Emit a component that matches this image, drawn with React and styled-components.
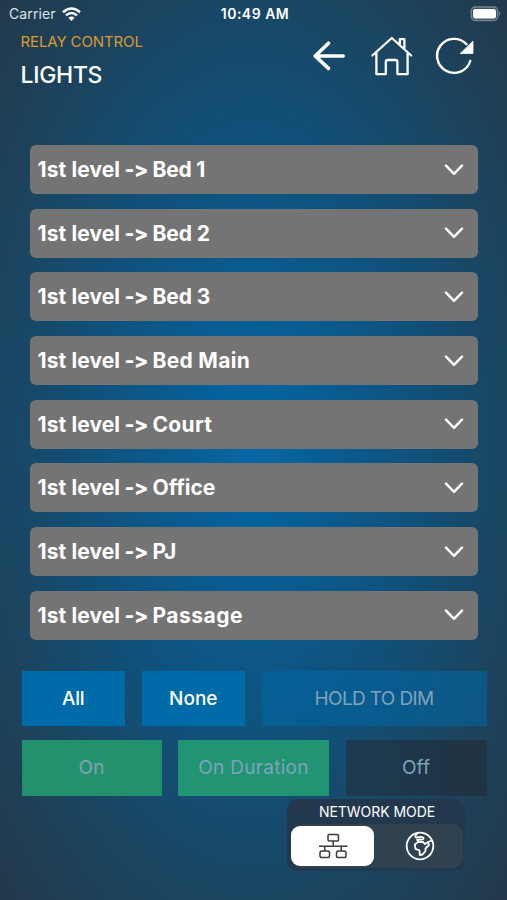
import React from "react";
import styled, { createGlobalStyle } from "styled-components";

const Global = createGlobalStyle`
  *{box-sizing:border-box}
  body{margin:0;background:#20384d}
  button{border:0;margin:0;padding:0;background:none;color:inherit;font:inherit}
`;
const Screen = styled.main`
  width:507px;height:900px;overflow:hidden;display:flex;flex-direction:column;color:#fff;
  font-family:Inter,"Liberation Sans",sans-serif;font-feature-settings:"calt" 0;
  background:radial-gradient(ellipse farthest-corner at 50% 49%,#0067a6 0%,#0a5b8e 25%,#124f77 50%,#1b4560 72%,#23384a 100%);
`;
const StatusBar = styled.div`
  height:28px;flex:none;display:grid;grid-template-columns:1fr auto 1fr;align-items:center;
  padding:0 6px 0 9px;font-size:14px;line-height:28px;
`;
const Carrier = styled.div`display:flex;align-items:center;gap:6px;color:#dbe3ea;letter-spacing:.1px;`;
const Time = styled.div`font-weight:600;letter-spacing:.5px;`;
const Battery = styled.svg`justify-self:end;display:block;margin-top:-1px;`;
const Header = styled.header`height:117px;flex:none;display:flex;justify-content:space-between;padding:0 32px 0 20.5px;`;
const Titles = styled.div`padding-top:4px;`;
const Eyebrow = styled.div`font-size:15px;line-height:20px;color:#dc9a2f;letter-spacing:-.12px;white-space:nowrap;`;
const Title = styled.h1`margin:9px 0 0;font-size:23px;line-height:28px;font-weight:500;letter-spacing:-.3px;`;
const Actions = styled.nav`display:flex;align-items:flex-start;padding-top:7px;gap:22px;svg{display:block}svg:first-child{margin-right:4px}`;
const List = styled.section`display:flex;flex-direction:column;gap:14.7px;padding:0 29.5px 0 30px;flex:none;`;
const Row = styled.button`
  height:49px;border-radius:6px;background:#747474;display:flex;align-items:center;justify-content:space-between;
  padding:0 14px 0 7.5px;font-size:21px;font-weight:700;text-align:left;
`;
const Path = styled.span`display:grid;grid-template-columns:87px 28px auto;align-items:center;white-space:pre;`;
const Level = styled.span`letter-spacing:.1px;`;
const Arrow = styled.span`font-weight:800;letter-spacing:-.5px;`;
const Room = styled.span`letter-spacing:${p => p.$ls}px;`;
const Controls = styled.section`display:flex;flex-direction:column;gap:14px;padding:31px 20.5px 0 21.5px;flex:none;`;
const ControlRow = styled.div`display:grid;grid-template-columns:${p => p.$cols};gap:16.5px;`;
const Control = styled.button`
  height:55.5px;padding-bottom:1px;background:${p => p.$bg};color:${p => p.$dim ? "#7fa3b8" : "#fff"};
  font-size:19px;font-weight:${p => p.$dim ? 400 : 500};letter-spacing:${p => p.$ls || 0}px;white-space:nowrap;
`;
const Mode = styled.section`
  align-self:flex-end;margin:3px 42px 0 0;width:178px;height:72px;border-radius:11px;background:#22394d;
  display:flex;flex-direction:column;align-items:center;padding:3px 2px 3px 4px;
`;
const ModeLabel = styled.div`font-size:14px;line-height:20px;height:22px;letter-spacing:-.05px;`;
const Segments = styled.div`align-self:stretch;height:44px;border-radius:11px;background:#30414f;display:grid;grid-template-columns:83px 1fr;align-items:center;`;
const Segment = styled.button`
  height:40px;border-radius:9px;display:grid;place-items:center;padding-left:${p => p.$on ? 0 : 2}px;
  background:${p => p.$on ? "#fff" : "transparent"};color:${p => p.$on ? "#3b3b3b" : "#fff"};
`;
const rooms = [["Bed 1", -.2], ["Bed 2", -.1], ["Bed 3", -.1], ["Bed Main", .3], ["Court", .3], ["Office", 0], ["PJ", 0], ["Passage", .5]];

const Chevron = () => <svg width="20" height="12" viewBox="0 0 20 12" fill="none" stroke="#fff" strokeWidth="2.4" strokeLinecap="round" strokeLinejoin="round"><path d="M2 1.6 10 9.8 18 1.6" /></svg>;

export default function App() {
  return <><Global /><Screen>
    <StatusBar>
      <Carrier>Carrier
        <svg width="19" height="15" viewBox="0 0 19 15" fill="none" stroke="#fff" strokeWidth="2.5"><path d="M1 5.2Q9.5-2.2 18 5.2M4 8.4Q9.5 3.5 15 8.4" /><path d="M6.4 10.8Q9.5 8 12.6 10.8L9.5 14Z" fill="#fff" stroke="none" /></svg>
      </Carrier>
      <Time>10:49 AM</Time>
      <Battery width="31" height="16" viewBox="0 0 31 16"><rect x="1.2" y="1" width="26.5" height="13.5" rx="4" fill="#3d5265" stroke="#768490" strokeWidth="1.3" /><rect x="3" y="3" width="23" height="9.5" rx="2.2" fill="#fff" /><path d="M29 5.5q2.5 2.2 0 4.5z" fill="#768490" /></Battery>
    </StatusBar>
    <Header>
      <Titles><Eyebrow>RELAY CONTROL</Eyebrow><Title>LIGHTS</Title></Titles>
      <Actions>
        <svg width="34" height="42" viewBox="0 0 34 42" fill="none" stroke="#fff" strokeWidth="3.6" strokeLinecap="round" strokeLinejoin="round"><path d="M17.5 8.2 4.2 21 17.5 33.4M4.2 21H32.2" /></svg>
        <svg width="42" height="42" viewBox="0 0 42 42" fill="none" stroke="#fff" strokeWidth="2.3" strokeLinecap="round" strokeLinejoin="round"><path d="M1.4 20.5 20.8 3 40.2 20.5M5.4 18.2V39.2H14.8V27Q14.8 25 16.8 25H24.4Q26.4 25 26.4 27V39.2H36.6V18.2M28.8 9V4.2H33.4V13.5" /></svg>
        <svg width="40" height="42" viewBox="0 0 40 42" fill="none" stroke="#fff" strokeWidth="2.4" strokeLinecap="round"><path d="M31.5 9.2A17 17 0 1 0 35.3 26" /><path d="M38 6.5V18.5H25.5Z" fill="#fff" strokeWidth=".8" strokeLinejoin="round" /></svg>
      </Actions>
    </Header>
    <List>{rooms.map(([name, ls]) => <Row key={name}><Path><Level>1st level </Level><Arrow>{"-> "}</Arrow><Room $ls={ls}>{name}</Room></Path><Chevron /></Row>)}</List>
    <Controls>
      <ControlRow $cols="103.5px 103.5px 1fr">
        <Control $bg="#006ba9" $ls={-.2}>All</Control><Control $bg="#006ba9">None</Control><Control $dim $ls={-.65} $bg="rgba(0,104,165,.55)">HOLD TO DIM</Control>
      </ControlRow>
      <ControlRow $cols="140px 151px 1fr">
        <Control $dim $bg="#23916d">On</Control><Control $dim $ls={.3} $bg="#219473">On Duration</Control><Control $dim $bg="linear-gradient(90deg,#1d3a51,#203342)">Off</Control>
      </ControlRow>
    </Controls>
    <Mode>
      <ModeLabel>NETWORK MODE</ModeLabel>
      <Segments>
        <Segment $on><svg width="32" height="26" viewBox="0 0 32 26" fill="none" stroke="currentColor" strokeWidth="1.5"><rect x="11" y="1.5" width="10.5" height="6.5" rx="1.2" /><rect x="3" y="18" width="9.5" height="6.5" rx="1.8" /><rect x="19.5" y="18" width="9.5" height="6.5" rx="1.8" /><path d="M16.2 8V13.2M2 13.2H30.5M7.8 13.2V18M24.2 13.2V18" /></svg></Segment>
        <Segment><svg width="30" height="30" viewBox="0 0 30 30" fill="none" stroke="currentColor" strokeWidth="1.8" strokeLinejoin="round"><circle cx="15" cy="15" r="13.3" /><path d="M12.5 2.5Q9 5 11 6.5L17 6Q20 7 17.5 8.5L12 8.8 13.5 10.8 18 11 20 13 23 11 27 9.5M23 11 24 14 20.5 17.5 20.5 20 17.5 23.5 14.8 24 14.5 19.5 10.5 17.8 9.8 13.5 13.5 10.8" /></svg></Segment>
      </Segments>
    </Mode>
  </Screen></>;
}
